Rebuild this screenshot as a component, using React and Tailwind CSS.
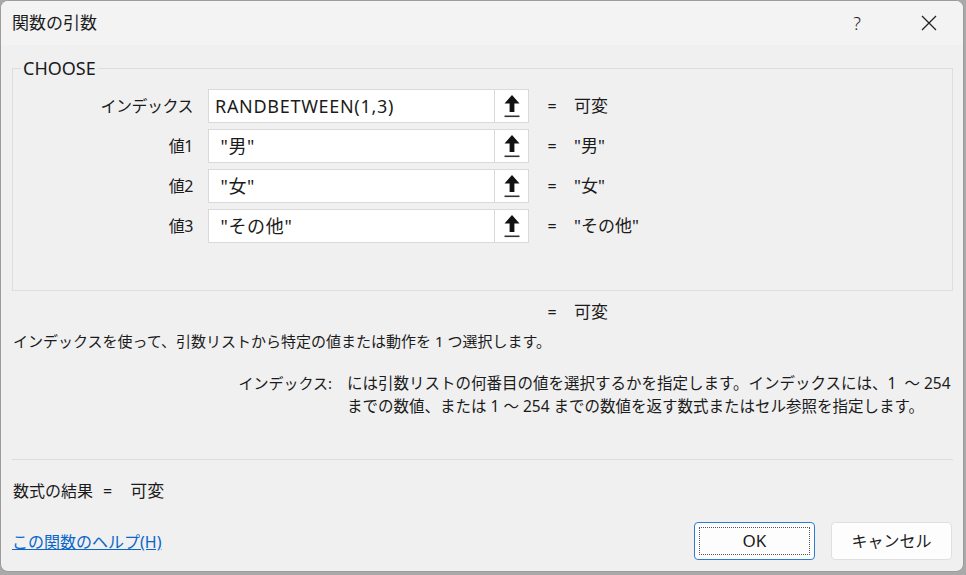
import React from "react";

const ArrowIcon = () => (
  <svg width="18" height="26" viewBox="0 0 18 26">
    <path d="M9 2 L16.5 10.5 L11.4 10.5 L11.4 19 L6.6 19 L6.6 10.5 L1.5 10.5 Z" fill="#111" />
    <rect x="1.5" y="22.5" width="15" height="1.6" fill="#333" />
  </svg>
);

function ArgRow({ label, value, result }) {
  return (
    <div className="flex h-[34px] items-center">
      <div className="w-[180px] text-right text-[16px] tracking-[-0.5px]">{label}</div>
      <div className="ml-[15px] flex h-[34px] w-[287px] items-center whitespace-pre border border-[#d9d9d9] bg-white px-[6px] text-[18px] tracking-[0.7px]">
        {value}
      </div>
      <button className="flex h-[34px] w-[34px] items-center justify-center border border-l-0 border-[#d9d9d9] bg-white">
        <ArrowIcon />
      </button>
      <div className="ml-[18px] w-[10px] text-center text-[16px]">=</div>
      <div className="ml-[17px] text-[17px]">{result}</div>
    </div>
  );
}

export default function App() {
  return (
    <div className="h-[575px] w-[966px] bg-[#a9a9a9] font-['Noto_Sans','Noto_Sans_CJK_JP',sans-serif] text-[15px] leading-[22px] text-[#1b1b1b]">
      <div className="flex h-[572px] w-[964px] flex-col overflow-hidden rounded-[8px] border border-[#9c9c9c] bg-[#f0f0f0]">
        {/* タイトルバー */}
        <div className="flex h-[44px] shrink-0 items-center bg-[#f3f3f3] pl-[11px]">
          <div className="text-[17px]">関数の引数</div>
          <div className="ml-auto mr-[60px] text-[18px] font-light">?</div>
          <svg width="16" height="16" viewBox="0 0 16 16" className="mr-[26px]">
            <path d="M1 1 L15 15 M15 1 L1 15" stroke="#222" strokeWidth="1.3" />
          </svg>
        </div>

        <div className="flex flex-1 flex-col px-[11px]">
          <fieldset className="mt-[12px] h-[234px] w-[941px] border border-[#dedede] px-0 pt-[10px]">
            <legend className="ml-[8px] px-[2px] text-[18px] leading-[22px]">CHOOSE</legend>
            <div className="flex flex-col gap-[6px]">
              <ArgRow label="インデックス" value="RANDBETWEEN(1,3)" result="可変" />
              <ArgRow label="値1" value={' "男"'} result={'"男"'} />
              <ArgRow label="値2" value={' "女"'} result={'"女"'} />
              <ArgRow label="値3" value={' "その他"'} result={'"その他"'} />
            </div>
          </fieldset>

          <div className="mt-[10px] flex h-[22px] items-center text-[16px]">
            <div className="ml-[535px] w-[10px] text-center">=</div>
            <div className="ml-[17px] text-[17px]">可変</div>
          </div>
          <div className="mt-[7px] h-[22px] pl-[1px]">
            インデックスを使って、引数リストから特定の値または動作を 1 つ選択します。
          </div>

          <div className="mt-[20px] flex">
            <div className="w-[320px] text-right">インデックス:</div>
            <div className="ml-[15px] whitespace-pre text-[15.5px] leading-[23px]">
              {"には引数リストの何番目の値を選択するかを指定します。インデックスには、1  ～ 254"}
              <br />
              {"までの数値、または 1 ～ 254 までの数値を返す数式またはセル参照を指定します。"}
            </div>
          </div>

          <div className="mt-[41px] h-px w-[941px] bg-[#dcdcdc]" />

          <div className="mt-[20px] flex h-[22px] items-center pl-[1px] text-[16px]">
            <span>数式の結果</span>
            <span className="ml-[10px]">=</span>
            <span className="ml-[18px] text-[17px]">可変</span>
          </div>

          <div className="mt-[20px] flex items-center">
            <a href="#" className="mt-[2px] text-[16px] text-[#0a66c8] underline">
              この関数のヘルプ(H)
            </a>
            <div className="ml-auto flex gap-[16px]">
              <button className="flex h-[38px] w-[121px] items-center justify-center rounded-[4px] border border-[#2f7bd1] bg-[#fdfdfd] p-[4px]">
                <span className="flex h-full w-full items-center justify-center border border-dotted border-[#555] text-[17px]">
                  OK
                </span>
              </button>
              <button className="flex h-[38px] w-[121px] items-center justify-center rounded-[4px] border border-[#e0e0e0] bg-[#fdfdfd] text-[16px]">
                キャンセル
              </button>
            </div>
          </div>
        </div>
      </div>
    </div>
  );
}
